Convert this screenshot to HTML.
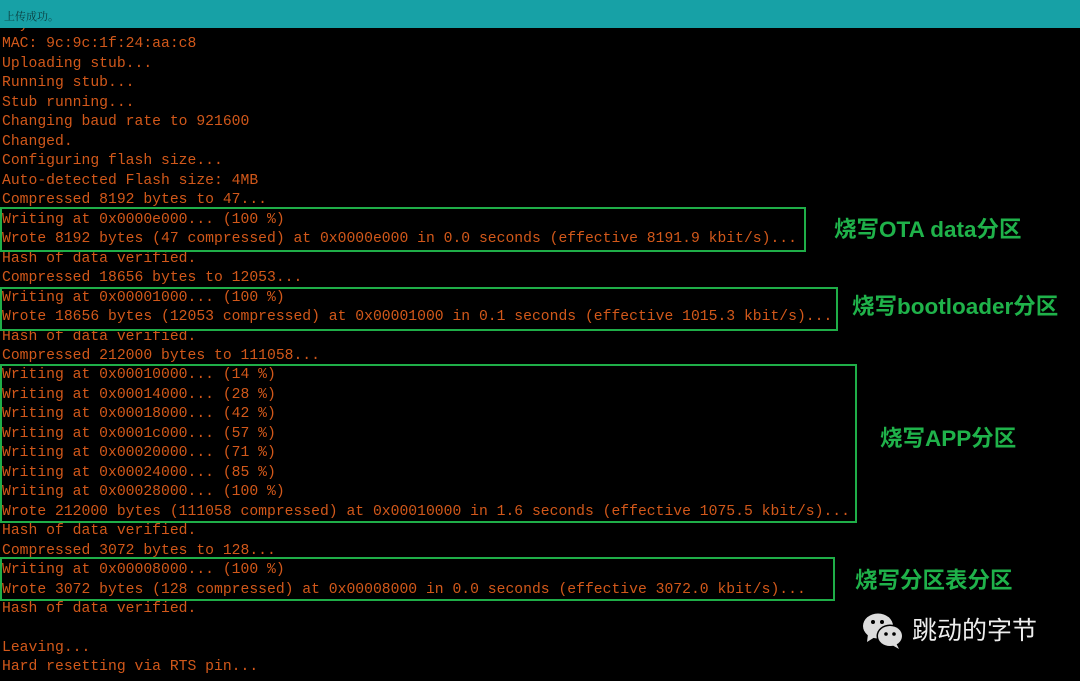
<!DOCTYPE html>
<html><head><meta charset="utf-8"><style>
html,body{margin:0;padding:0;background:#000;width:1080px;height:681px;overflow:hidden;position:relative}
#log{position:absolute;left:2px;top:16px;font-family:"Liberation Mono",monospace;font-size:14.73px;line-height:19.47px;color:#d2581a;white-space:pre;margin:0}
.bar{position:absolute;left:0;top:0;width:1080px;height:28px;background:#17a1a6;z-index:2}
.bar span{position:absolute;left:4px;top:8px;font-size:11px;color:#0b3b3d;font-family:"Liberation Serif","Noto Serif CJK SC",serif}
.box{position:absolute;left:0;border:2px solid #1fae48;box-sizing:border-box}
.lbl{position:absolute;color:#1fb24a;font-weight:bold;font-size:22.5px;font-family:"Liberation Sans","Noto Sans CJK SC",sans-serif;white-space:nowrap;line-height:1}
.wm{position:absolute;left:912px;top:617px;color:#eee;font-size:25px;font-family:"Noto Sans CJK SC",sans-serif;line-height:1}
</style></head><body>
<div class="bar"><span>上传成功。</span></div>
<pre id="log">Crystal is 40MHz
MAC: 9c:9c:1f:24:aa:c8
Uploading stub...
Running stub...
Stub running...
Changing baud rate to 921600
Changed.
Configuring flash size...
Auto-detected Flash size: 4MB
Compressed 8192 bytes to 47...
Writing at 0x0000e000... (100 %)
Wrote 8192 bytes (47 compressed) at 0x0000e000 in 0.0 seconds (effective 8191.9 kbit/s)...
Hash of data verified.
Compressed 18656 bytes to 12053...
Writing at 0x00001000... (100 %)
Wrote 18656 bytes (12053 compressed) at 0x00001000 in 0.1 seconds (effective 1015.3 kbit/s)...
Hash of data verified.
Compressed 212000 bytes to 111058...
Writing at 0x00010000... (14 %)
Writing at 0x00014000... (28 %)
Writing at 0x00018000... (42 %)
Writing at 0x0001c000... (57 %)
Writing at 0x00020000... (71 %)
Writing at 0x00024000... (85 %)
Writing at 0x00028000... (100 %)
Wrote 212000 bytes (111058 compressed) at 0x00010000 in 1.6 seconds (effective 1075.5 kbit/s)...
Hash of data verified.
Compressed 3072 bytes to 128...
Writing at 0x00008000... (100 %)
Wrote 3072 bytes (128 compressed) at 0x00008000 in 0.0 seconds (effective 3072.0 kbit/s)...
Hash of data verified.

Leaving...
Hard resetting via RTS pin...</pre>
<div class="box" style="top:207px;width:806px;height:45px"></div>
<div class="box" style="top:287px;width:838px;height:44px"></div>
<div class="box" style="top:364px;width:857px;height:159px"></div>
<div class="box" style="top:557px;width:835px;height:44px"></div>
<div class="lbl" style="left:834px;top:219px">烧写OTA data分区</div>
<div class="lbl" style="left:852px;top:296px">烧写bootloader分区</div>
<div class="lbl" style="left:880px;top:428px">烧写APP分区</div>
<div class="lbl" style="left:855px;top:570px">烧写分区表分区</div>
<svg style="position:absolute;left:862px;top:612px" width="46" height="40" viewBox="0 0 46 40">
<ellipse cx="16" cy="14" rx="15" ry="12.5" fill="#ddd"/>
<path d="M6 22 L5 30 L13 25 Z" fill="#ddd"/>
<ellipse cx="28" cy="24" rx="13.5" ry="11.5" fill="#000"/>
<ellipse cx="28" cy="24" rx="12" ry="10" fill="#ddd"/>
<path d="M34 31 L37 37 L30 33 Z" fill="#ddd"/>
<circle cx="11" cy="10" r="2" fill="#000"/><circle cx="20" cy="10" r="2" fill="#000"/>
<circle cx="24" cy="22" r="1.8" fill="#000"/><circle cx="32" cy="22" r="1.8" fill="#000"/>
</svg>
<div class="wm">跳动的字节</div>
</body></html>
